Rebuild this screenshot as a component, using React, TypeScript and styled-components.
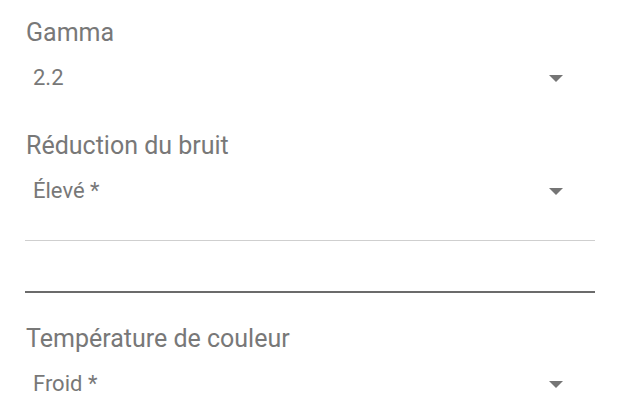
import styled, { createGlobalStyle } from 'styled-components';

const GlobalStyle = createGlobalStyle`
  html, body {
    margin: 0;
    padding: 0;
    background: #ffffff;
  }
  body {
    font-family: Roboto, "Noto Sans", "Liberation Sans", sans-serif;
  }
`;

const Screen = styled.div`
  width: 620px;
  height: 410px;
  box-sizing: border-box;
  padding: 19px 25px 0 25px;
  display: flex;
  flex-direction: column;
  overflow: hidden;
`;

const Field = styled.div<{ $gapAfter: number }>`
  display: flex;
  flex-direction: column;
  gap: 19px;
  margin-bottom: ${(p) => p.$gapAfter}px;
`;

const Label = styled.div`
  font-size: 25px;
  line-height: 28px;
  height: 28px;
  color: #787878;
  padding-left: 1px;
`;

const SelectRow = styled.div`
  display: flex;
  align-items: center;
  justify-content: space-between;
  height: 24px;
  padding-left: 8px;
  padding-right: 32px;
`;

const Value = styled.span`
  font-size: 22px;
  line-height: 24px;
  color: #787878;
`;

const Arrow = styled.svg`
  width: 14px;
  height: 7px;
  fill: #757575;
`;

const Rule = styled.div<{ $dark?: boolean }>`
  height: ${(p) => (p.$dark ? 2 : 1)}px;
  background: ${(p) => (p.$dark ? '#6b6b6b' : '#cfcfcf')};
`;

const EmptyInput = styled.div`
  padding-top: 50px;
  margin-bottom: 32px;
`;

const DropArrow = () => (
  <Arrow viewBox="0 0 14 7">
    <polygon points="0,0 14,0 7,7" />
  </Arrow>
);

type Pref = { label: string; value: string };

const Select = ({ label, value, gapAfter }: Pref & { gapAfter: number }) => (
  <Field $gapAfter={gapAfter}>
    <Label>{label}</Label>
    <SelectRow>
      <Value>{value}</Value>
      <DropArrow />
    </SelectRow>
  </Field>
);

export default function App() {
  return (
    <>
      <GlobalStyle />
      <Screen>
        <Select label="Gamma" value="2.2" gapAfter={42} />
        <Select label="Réduction du bruit" value="Élevé *" gapAfter={37} />
        <Rule />
        <EmptyInput>
          <Rule $dark />
        </EmptyInput>
        <Select label="Température de couleur" value="Froid *" gapAfter={0} />
      </Screen>
    </>
  );
}
